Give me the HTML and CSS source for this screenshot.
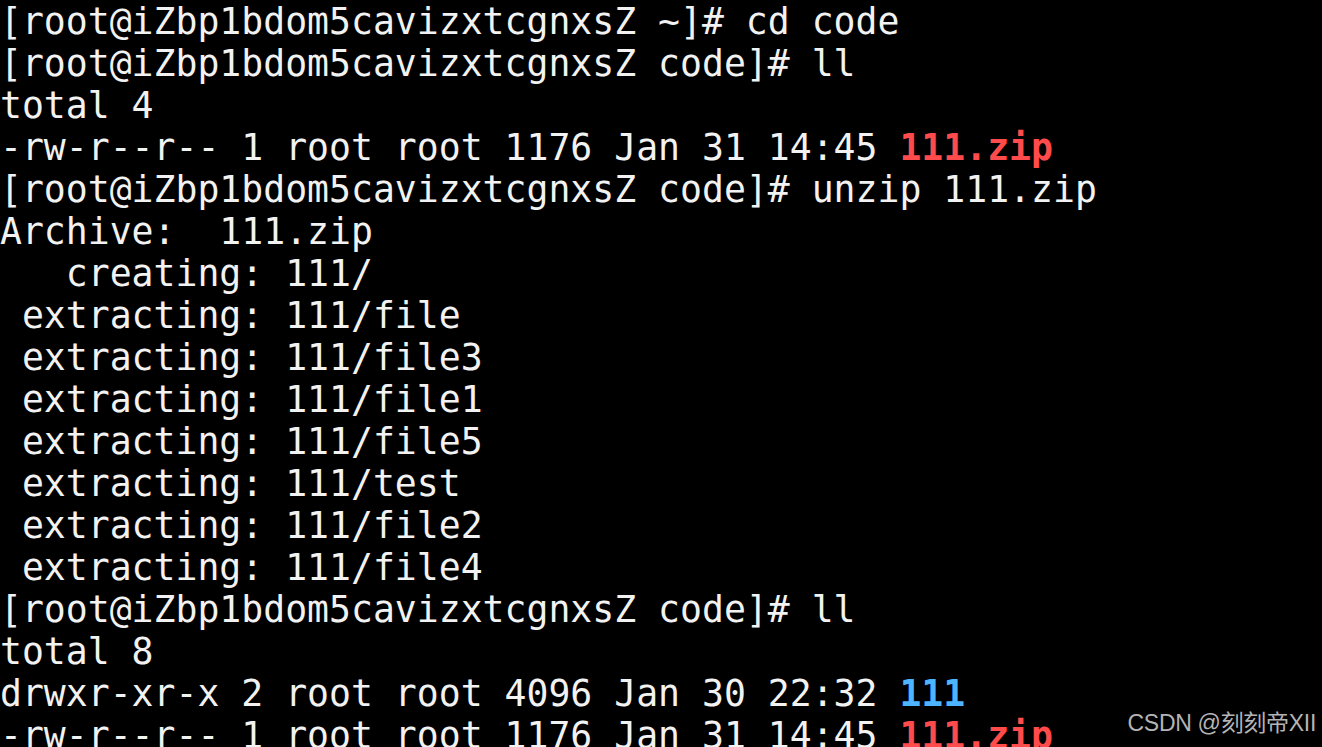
FILE: index.html
```html
<!DOCTYPE html>
<html>
<head>
<meta charset="utf-8">
<link rel="stylesheet" href="styles.css">
</head>
<body>
<pre class="term">[root@iZbp1bdom5cavizxtcgnxsZ ~]# cd code
[root@iZbp1bdom5cavizxtcgnxsZ code]# ll
total 4
-rw-r--r-- 1 root root 1176 Jan 31 14:45 <span class="zip">111.zip</span>
[root@iZbp1bdom5cavizxtcgnxsZ code]# unzip 111.zip
Archive:  111.zip
   creating: 111/
 extracting: 111/file
 extracting: 111/file3
 extracting: 111/file1
 extracting: 111/file5
 extracting: 111/test
 extracting: 111/file2
 extracting: 111/file4
[root@iZbp1bdom5cavizxtcgnxsZ code]# ll
total 8
drwxr-xr-x 2 root root 4096 Jan 30 22:32 <span class="dir">111</span>
-rw-r--r-- 1 root root 1176 Jan 31 14:45 <span class="zip">111.zip</span></pre>
<div class="mark">CSDN @刻刻帝XII</div>
</body>
</html>
```
FILE: styles.css
```css
html, body {
  margin: 0;
  padding: 0;
  background: #000;
  height: 100%;
  overflow: hidden;
}
.term {
  margin: 0;
  padding: 1px 0 0 0;
  color: #f2f2f2;
  font-family: "DejaVu Sans Mono", monospace;
  font-size: 36.45px;
  line-height: 42px;
  white-space: pre;
}
.zip {
  color: #ff4b4b;
  font-weight: bold;
}
.dir {
  color: #4db5ff;
  font-weight: bold;
}
.mark {
  position: absolute;
  right: 6px;
  bottom: 11px;
  color: #b4b4b4;
  font-family: "Liberation Sans", "Noto Sans CJK SC", sans-serif;
  font-size: 23px;
  line-height: 26px;
  letter-spacing: -0.3px;
}
```
